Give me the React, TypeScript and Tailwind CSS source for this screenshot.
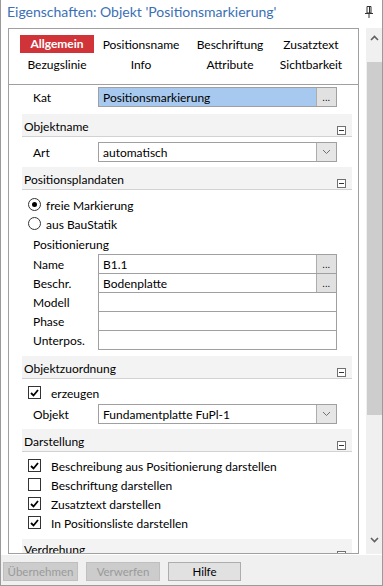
import React from "react";

const font = { fontFamily: 'Lato, "Noto Sans", sans-serif' };

function Minus() {
  return (
    <div className="w-[9px] h-[9px] border border-[#707070] bg-white flex items-center justify-center">
      <div className="w-[5px] h-px bg-[#333]" />
    </div>
  );
}

function Header({ title }: { title: string }) {
  return (
    <div className="h-[23px] bg-[#f3f3f3] border-b border-[#d2d2d2] flex items-center justify-between pl-[2px] pr-[6px]">
      <span className="text-[12px] text-black leading-none mt-[3px]">{title}</span>
      <div className="mt-[11px]">
        <Minus />
      </div>
    </div>
  );
}

function Dots() {
  return (
    <div className="w-[20px] self-stretch bg-[#e1e1e1] border-l border-[#adadad] flex items-end justify-center pb-[4px]">
      <span className="text-[9px] leading-none text-black tracking-[0.5px]">...</span>
    </div>
  );
}

function Chevron({ up = false }: { up?: boolean }) {
  return (
    <svg width="9" height="6" viewBox="0 0 9 6">
      <path d={up ? "M1 5 L4.5 1.5 L8 5" : "M1 1 L4.5 4.5 L8 1"} fill="none" stroke={up ? "#606060" : "#707070"} strokeWidth={up ? 1.6 : 1} />
    </svg>
  );
}

function Field({ value, blue = false, dots = false, combo = false }: { value?: string; blue?: boolean; dots?: boolean; combo?: boolean }) {
  return (
    <div className={`w-[239px] h-[20px] border border-[#a0a0a0] flex ${blue ? "bg-[#a8c9ef]" : "bg-white"}`}>
      <div className="flex-1 flex items-center pl-[4px] pt-[2px] text-[12px] text-black leading-none">{value}</div>
      {dots && <Dots />}
      {combo && (
        <div className="w-[20px] self-stretch bg-[#e6e6e6] border-l border-[#adadad] flex items-center justify-center">
          <Chevron />
        </div>
      )}
    </div>
  );
}

function LabeledRow({ label, children }: { label: string; children: React.ReactNode }) {
  return (
    <div className="flex items-center">
      <div className="w-[76px] pl-[11px] mt-[2px] text-[12px] text-black leading-none">{label}</div>
      {children}
    </div>
  );
}

function Check({ checked, label }: { checked: boolean; label: string }) {
  return (
    <div className="h-[19px] flex items-center pl-[6px]">
      <div className="w-[13px] h-[13px] border border-[#333] bg-white flex items-center justify-center">
        {checked && (
          <svg width="9" height="8" viewBox="0 0 9 8">
            <path d="M1 4 L3.5 6.5 L8 1" fill="none" stroke="#000" strokeWidth="1.8" />
          </svg>
        )}
      </div>
      <span className="ml-[10px] mt-[2px] text-[12px] text-black leading-none">{label}</span>
    </div>
  );
}

function Radio({ checked, label }: { checked: boolean; label: string }) {
  return (
    <div className="h-[19px] flex items-center pl-[6px]">
      <div className="w-[13px] h-[13px] rounded-full border border-[#333] bg-white flex items-center justify-center">
        {checked && <div className="w-[5px] h-[5px] rounded-full bg-black" />}
      </div>
      <span className="ml-[5px] mt-[2px] text-[12px] text-black leading-none">{label}</span>
    </div>
  );
}

function Tab({ label, active = false }: { label: string; active?: boolean }) {
  return (
    <div className="flex items-center justify-center h-[18px]">
      {active ? (
        <div className="w-[74px] h-[18px] bg-[#d13438] text-white font-bold text-[12px] flex items-center justify-center leading-none">
          {label}
        </div>
      ) : (
        <span className="text-[12px] text-black leading-none mt-[1px]">{label}</span>
      )}
    </div>
  );
}

export default function App() {
  return (
    <div style={font} className="w-[383px] h-[586px] bg-white flex flex-col border-l border-r border-b border-[#9a9a9a] overflow-hidden">
      {/* Title */}
      <div className="h-[28px] flex items-start justify-between pl-[6px] pr-[9px] pt-[4px] shrink-0">
        <span className="text-[14px] leading-[16px] text-[#3a70b5]">Eigenschaften: Objekt 'Positionsmarkierung'</span>
        <svg width="8" height="12" viewBox="0 0 8 12" className="mt-[2px]">
          <path d="M2 0.5 H6 V7 H2 Z" fill="none" stroke="#333" strokeWidth="1" />
          <path d="M0 7.5 H8" stroke="#333" strokeWidth="1" />
          <path d="M4 8 V12" stroke="#333" strokeWidth="1" />
          <path d="M4.5 1 V7" stroke="#333" strokeWidth="1" />
        </svg>
      </div>

      {/* Main */}
      <div className="flex h-[526px] shrink-0">
        {/* Panel */}
        <div className="ml-[7px] w-[351px] border border-[#a0a0a0] flex flex-col overflow-hidden">
          <div className="h-[56px] border-b border-[#a0a0a0] shrink-0 pt-[6px] pl-[9px]">
            <div className="grid grid-cols-[78px_90px_88px_74px] gap-y-[2px]">
              <Tab label="Allgemein" active />
              <Tab label="Positionsname" />
              <Tab label="Beschriftung" />
              <Tab label="Zusatztext" />
              <Tab label="Bezugslinie" />
              <Tab label="Info" />
              <Tab label="Attribute" />
              <Tab label="Sichtbarkeit" />
            </div>
          </div>
          <div className="flex-1 overflow-hidden pl-[13px] pr-[6px]">
            <div className="mt-[2px]">
              <LabeledRow label="Kat">
                <Field value="Positionsmarkierung" blue dots />
              </LabeledRow>
            </div>
            <div className="mt-[7px]">
              <Header title="Objektname" />
            </div>
            <div className="mt-[5px]">
              <LabeledRow label="Art">
                <Field value="automatisch" combo />
              </LabeledRow>
            </div>
            <div className="mt-[5px]">
              <Header title="Positionsplandaten" />
            </div>
            <div className="mt-[5px]">
              <Radio checked label="freie Markierung" />
              <Radio checked={false} label="aus BauStatik" />
              <div className="h-[20px] flex items-center pl-[11px] pt-[4px] text-[12px] text-black leading-none">Positionierung</div>
            </div>
            <div className="mt-[1px] flex flex-col">
              <LabeledRow label="Name">
                <Field value="B1.1" dots />
              </LabeledRow>
              <div className="-mt-px">
                <LabeledRow label="Beschr.">
                  <Field value="Bodenplatte" dots />
                </LabeledRow>
              </div>
              <div className="-mt-px">
                <LabeledRow label="Modell">
                  <Field />
                </LabeledRow>
              </div>
              <div className="-mt-px">
                <LabeledRow label="Phase">
                  <Field />
                </LabeledRow>
              </div>
              <div className="-mt-px">
                <LabeledRow label="Unterpos.">
                  <Field />
                </LabeledRow>
              </div>
            </div>
            <div className="mt-[6px]">
              <Header title="Objektzuordnung" />
            </div>
            <div className="mt-[4px]">
              <Check checked label="erzeugen" />
            </div>
            <div className="mt-[2px]">
              <LabeledRow label="Objekt">
                <Field value="Fundamentplatte FuPl-1" combo />
              </LabeledRow>
            </div>
            <div className="mt-[5px]">
              <Header title="Darstellung" />
            </div>
            <div className="mt-[4px]">
              <Check checked label="Beschreibung aus Positionierung darstellen" />
              <Check checked={false} label="Beschriftung darstellen" />
              <Check checked label="Zusatztext darstellen" />
              <Check checked label="In Positionsliste darstellen" />
            </div>
            <div className="mt-[7px]">
              <div className="h-[23px] bg-[#f3f3f3] border-b border-[#d2d2d2] flex items-start justify-between pl-[2px] pr-[6px] pt-[5px]">
                <span className="text-[12px] text-black leading-none">Verdrehung</span>
                <div className="mt-[7px]">
                  <Minus />
                </div>
              </div>
            </div>
          </div>
        </div>

        {/* Scrollbar */}
        <div className="ml-[7px] w-[16px] bg-[#f0f0f0] flex flex-col items-center">
          <div className="h-[17px] flex items-center justify-center mt-[1px]">
            <Chevron up />
          </div>
          <div className="mt-[16px] w-[15px] h-[353px] bg-[#cdcdcd]" />
          <div className="flex-1" />
          <div className="h-[17px] flex items-center justify-center mb-[6px]">
            <svg width="9" height="6" viewBox="0 0 9 6">
              <path d="M1 1 L4.5 4.5 L8 1" fill="none" stroke="#606060" strokeWidth="1.6" />
            </svg>
          </div>
        </div>
      </div>

      {/* Bottom bar */}
      <div className="flex-1 bg-[#f0f0f0] mt-[1px] flex items-start gap-[8px] pl-[2px] pt-[7px]">
        <div className="w-[75px] h-[19px] bg-[#cccccc] border border-[#bfbfbf] flex items-center justify-center text-[11.5px] text-[#9a9a9a] leading-none">Übernehmen</div>
        <div className="w-[74px] h-[19px] bg-[#cccccc] border border-[#bfbfbf] flex items-center justify-center text-[11.5px] text-[#9a9a9a] leading-none">Verwerfen</div>
        <div className="w-[73px] h-[19px] bg-[#e1e1e1] border border-[#adadad] flex items-center justify-center text-[11.5px] text-black leading-none">Hilfe</div>
      </div>
    </div>
  );
}
